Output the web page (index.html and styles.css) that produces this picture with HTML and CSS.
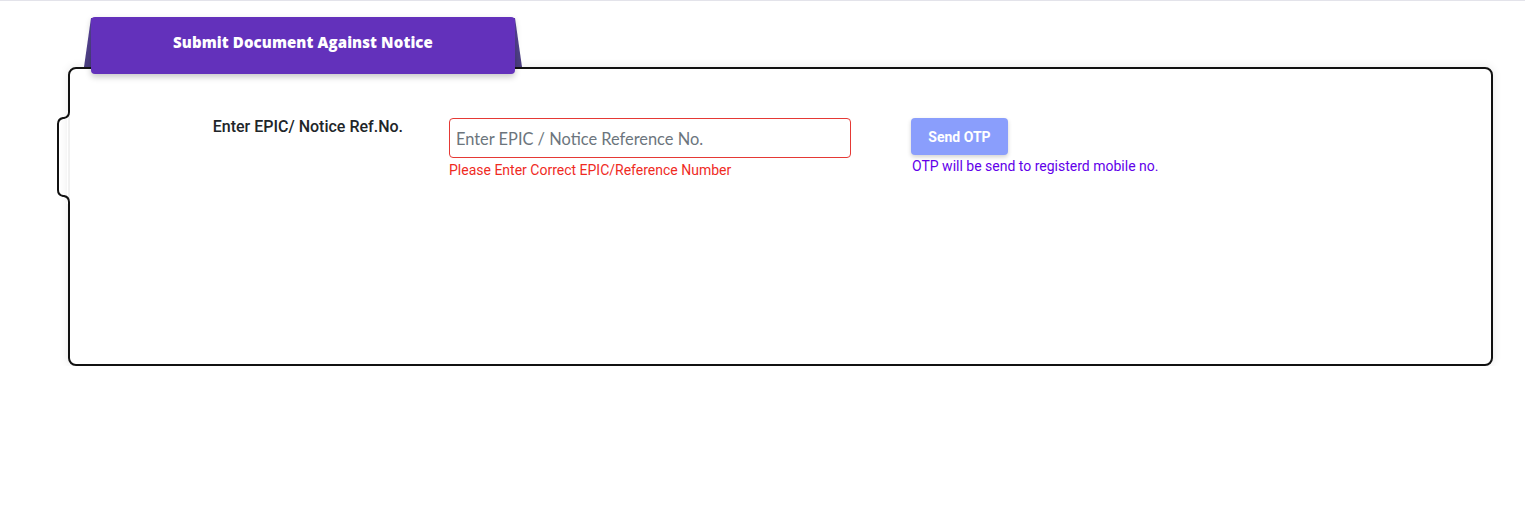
FILE: index.html
```html
<!DOCTYPE html>
<html lang="en">
<head>
<meta charset="utf-8">
<title>Submit Document Against Notice</title>
<link rel="stylesheet" href="styles.css">
</head>
<body>
<div class="page">
  <div class="tab-wrap">
    <div class="tab">Submit Document Against Notice</div>
  </div>
  <div class="card">
    <svg class="notch" width="18" height="100" viewBox="0 0 18 100" aria-hidden="true">
      <rect x="13" y="3" width="5" height="93" fill="#fff"/>
      <line x1="15" y1="8" x2="15" y2="92" stroke="#e2e2e2" stroke-width="1"/>
      <path d="M15 0 L15 4 Q15 9 10 10 L9 10 Q4 11 4 16 L4 82 Q4 87 9 88 L10 88 Q15 89 15 94 L15 100" fill="none" stroke="#111" stroke-width="2"/>
    </svg>
    <div class="form-row">
      <label class="label" for="epic">Enter EPIC/ Notice Ref.No.</label>
      <div class="field">
        <input id="epic" class="input" type="text" placeholder="Enter EPIC / Notice Reference No.">
        <div class="error">Please Enter Correct EPIC/Reference Number</div>
      </div>
      <div class="otp">
        <button class="btn" type="button">Send OTP</button>
        <div class="hint">OTP will be send to registerd mobile no.</div>
      </div>
    </div>
  </div>
</div>
</body>
</html>
```

FILE: styles.css
```css
* { box-sizing: border-box; }

html, body {
  margin: 0;
  padding: 0;
  background: #fff;
}

body {
  border-top: 1px solid #e3e3ea;
  font-family: Roboto, "Liberation Sans", sans-serif;
  color: #212529;
}

.page {
  padding: 16px 32px 0 68px;
}

.tab-wrap {
  position: relative;
  z-index: 2;
  margin-left: 23px;
  width: 424px;
  margin-bottom: -7px;
}

.tab-wrap::before {
  content: "";
  position: absolute;
  z-index: -1;
  top: 1px;
  left: -7px;
  right: -7px;
  height: 49px;
  background: linear-gradient(to bottom, #5a44a0, #4a3d7e);
  clip-path: polygon(0 100%, 7px 0, calc(100% - 7px) 0, 100% 100%);
}

.tab {
  height: 57px;
  background: #6331bb;
  border-radius: 4px;
  box-shadow: 0 3px 6px rgba(0, 0, 0, 0.22);
  color: #fff;
  font-family: "Open Sans", "Liberation Sans", sans-serif;
  font-weight: 800;
  font-size: 15px;
  letter-spacing: 0.1px;
  display: flex;
  align-items: center;
  justify-content: center;
  padding-bottom: 8px;
}

.card {
  position: relative;
  height: 299px;
  border: 2px solid #111;
  border-radius: 8px;
  background: #fff;
  box-shadow: 0 0 10px rgba(0, 0, 0, 0.1);
  padding-top: 49px;
}

.notch {
  position: absolute;
  left: -16px;
  top: 39px;
}

.form-row {
  display: grid;
  grid-template-columns: 333px 402px 97px;
  column-gap: 46px;
  align-items: start;
}

.label {
  text-align: right;
  font-size: 16px;
  font-weight: 500;
  line-height: 18px;
  color: #212529;
}

.field {
  display: flex;
  flex-direction: column;
}

.input {
  width: 402px;
  height: 40px;
  border: 1px solid #e53935;
  border-radius: 4px;
  padding: 0 6px;
  font-family: Lato, "Liberation Sans", sans-serif;
  font-size: 16.4px;
  color: #495057;
  background: #fff;
  outline: none;
}

.input::placeholder {
  color: #6c757d;
}

.error {
  margin-top: 3px;
  font-size: 14px;
  line-height: 18px;
  color: #ef2b1f;
}

.otp {
  margin-left: 14px;
  display: flex;
  flex-direction: column;
  align-items: flex-start;
}

.btn {
  width: 97px;
  height: 37px;
  border: none;
  border-radius: 4px;
  background: #8a9efc;
  color: #fff;
  font-family: Roboto, "Liberation Sans", sans-serif;
  font-weight: 700;
  font-size: 14px;
  box-shadow: 0 2px 4px rgba(0, 0, 0, 0.18);
  padding: 0;
}

.hint {
  margin-top: 1px;
  margin-left: 1px;
  white-space: nowrap;
  font-size: 14px;
  line-height: 20px;
  color: #6200ea;
}
```
